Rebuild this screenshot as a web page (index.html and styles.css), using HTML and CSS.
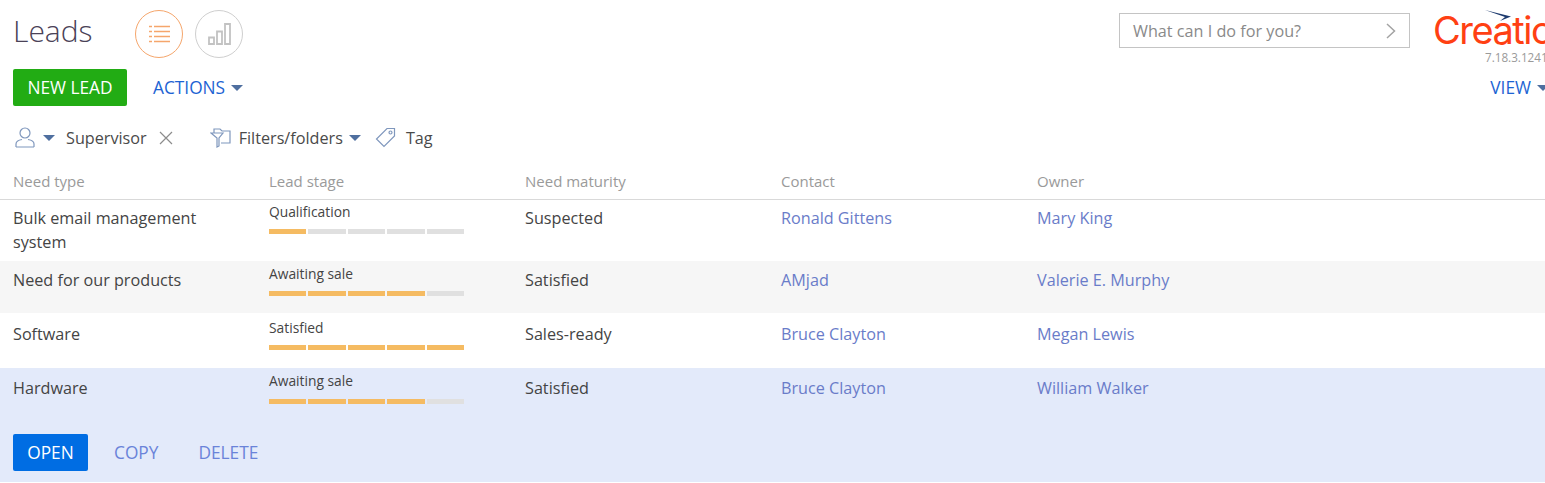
FILE: index.html
```html
<!DOCTYPE html>
<html lang="en">
<head>
  <meta charset="UTF-8" />
  <meta name="viewport" content="width=device-width, initial-scale=1.0" />
  <title>Leads</title>
  <link rel="stylesheet" href="styles.css">
</head>
<body>
  <div class="header">
    <h1 class="page-title">Leads</h1>
    <div class="view-switch">
      <div class="round-btn active">
        <svg width="21" height="18" viewBox="0 0 21 18" fill="none" stroke="#f5a66c" stroke-width="1.400">
          <path d="M0 1.500h3M5 1.500h16M0 6.500h3M5 6.500h16M0 11.500h3M5 11.500h16M0 16.500h3M5 16.500h16"/>
        </svg>
      </div>
      <div class="round-btn">
        <svg width="23" height="22" viewBox="0 0 23 22" fill="none" stroke="#c2c2c2" stroke-width="1.800">
          <path d="M1 14.500h5v6.500H1zM9 8.500h5v12.500H9zM17 1h5v20h-5z"/>
        </svg>
      </div>
    </div>
    <div class="header-right">
      <div class="search-box">
        <span>What can I do for you?</span>
        <svg width="10" height="16" viewBox="0 0 10 16" fill="none" stroke="#a3a3a3" stroke-width="1.500"><path d="M1 1l7.500 7L1 15"/></svg>
      </div>
      <div class="logo">
        <svg class="logo-wing" width="26" height="11" viewBox="0 0 26 11"><path d="M0 0l26 6.500-11 4.500 5-4z" fill="#1d3a6e"/></svg>
        <div class="logo-text">Creatio</div>
        <div class="version">7.18.3.1241</div>
      </div>
    </div>
  </div>

  <div class="toolbar">
    <div class="btn green">NEW LEAD</div>
    <div class="link-btn">ACTIONS<i class="caret"></i></div>
    <div class="link-btn view-btn">VIEW<i class="caret"></i></div>
  </div>

  <div class="filters">
    <svg class="user-icon" width="20" height="21" viewBox="0 0 20 21" fill="none" stroke="#7f97bd" stroke-width="1.200">
      <circle cx="10" cy="6" r="5"/>
      <path d="M1 20v-3c0-2.500 3-4 6-4.500M19 20v-3c0-2.500-3-4-6-4.500M1 20h18"/>
    </svg>
    <i class="caret user-caret"></i>
    <span class="filter-text">Supervisor</span>
    <svg class="close-icon" width="14" height="14" viewBox="0 0 14 14" stroke="#8c8c8c" stroke-width="1.200"><path d="M1 1l12 12M13 1L1 13"/></svg>
    <svg class="folder-icon" width="21" height="21" viewBox="0 0 21 21" fill="none" stroke="#7f97bd" stroke-width="1.200">
      <path d="M4 6V2h6l2 2h8v12h-9M1 6h12L9 11v8l-2 1v-9z"/>
    </svg>
    <span class="filter-text">Filters/folders</span>
    <i class="caret folder-caret"></i>
    <svg class="tag-icon" width="21" height="21" viewBox="0 0 21 21" fill="none" stroke="#7f97bd" stroke-width="1.200">
      <path d="M12 1.500h7.500V9L9 19.500 1.500 12z"/><circle cx="15.500" cy="5.500" r="1.500"/>
    </svg>
    <span class="filter-text">Tag</span>
  </div>

  <div class="grid-head">
    <div>Need type</div>
    <div>Lead stage</div>
    <div>Need maturity</div>
    <div>Contact</div>
    <div>Owner</div>
  </div>

  <div class="row row-first">
    <div>Bulk email management system</div>
    <div class="stage">
      <div class="stage-name">Qualification</div>
      <div class="bar"><i class="on"></i><i></i><i></i><i></i><i></i></div>
    </div>
    <div>Suspected</div>
    <div><a>Ronald Gittens</a></div>
    <div><a>Mary King</a></div>
  </div>

  <div class="row row-grey">
    <div>Need for our products</div>
    <div class="stage">
      <div class="stage-name">Awaiting sale</div>
      <div class="bar"><i class="on"></i><i class="on"></i><i class="on"></i><i class="on"></i><i></i></div>
    </div>
    <div>Satisfied</div>
    <div><a>AMjad</a></div>
    <div><a>Valerie E. Murphy</a></div>
  </div>

  <div class="row row-plain">
    <div>Software</div>
    <div class="stage">
      <div class="stage-name">Satisfied</div>
      <div class="bar"><i class="on"></i><i class="on"></i><i class="on"></i><i class="on"></i><i class="on"></i></div>
    </div>
    <div>Sales-ready</div>
    <div><a>Bruce Clayton</a></div>
    <div><a>Megan Lewis</a></div>
  </div>

  <div class="selected">
    <div class="row row-active">
      <div>Hardware</div>
      <div class="stage">
        <div class="stage-name">Awaiting sale</div>
        <div class="bar"><i class="on"></i><i class="on"></i><i class="on"></i><i class="on"></i><i></i></div>
      </div>
      <div>Satisfied</div>
      <div><a>Bruce Clayton</a></div>
      <div><a>William Walker</a></div>
    </div>
    <div class="row-actions">
      <div class="btn blue">OPEN</div>
      <div class="row-link">COPY</div>
      <div class="row-link">DELETE</div>
    </div>
  </div>
</body>
</html>
```

FILE: styles.css
```css
* {
  box-sizing: border-box;
}
html, body {
  overflow: hidden;
}
body {
  margin: 0;
  height: 483px;
  font-family: 'Open Sans', 'Liberation Sans', sans-serif;
  font-size: 16.200px;
  color: #444;
  background: #fff;
}
.header {
  display: flex;
  align-items: flex-start;
  height: 69px;
  padding-left: 13px;
}
.page-title {
  margin: 10px 0 0;
  width: 122px;
  font-size: 30px;
  line-height: 42px;
  font-weight: 300;
  color: #4a4257;
}
.view-switch {
  display: flex;
  gap: 12px;
  margin-top: 10px;
}
.round-btn {
  width: 48px;
  height: 48px;
  border: 1.500px solid #cfcfcf;
  border-radius: 50%;
  display: flex;
  align-items: center;
  justify-content: center;
}
.round-btn.active {
  border-color: #f5a66c;
}
.header-right {
  margin-left: auto;
  display: flex;
  align-items: flex-start;
}
.search-box {
  width: 291px;
  height: 35px;
  margin-top: 13px;
  border: 1px solid #c4c4c4;
  display: flex;
  align-items: center;
  justify-content: space-between;
  padding: 0 13px;
  color: #8a8a8a;
}
.logo {
  position: relative;
  width: 135px;
  padding-left: 23px;
  white-space: nowrap;
}
.logo-wing {
  position: absolute;
  top: 10px;
  left: 75px;
}
.logo-text {
  margin-top: 11px;
  font-family: 'Inter', 'Liberation Sans', sans-serif;
  font-size: 38px;
  line-height: 38px;
  font-weight: 400;
  letter-spacing: -1.500px;
  color: #ff4013;
}
.version {
  margin-top: 0;
  padding-left: 52px;
  font-size: 11.700px;
  line-height: 16px;
  color: #9a9a9a;
}
.toolbar {
  display: flex;
  align-items: center;
  height: 37px;
  padding-left: 13px;
}
.btn {
  display: flex;
  align-items: center;
  justify-content: center;
  height: 37px;
  border-radius: 2px;
  font-size: 17.300px;
  color: #fff;
}
.btn.green {
  width: 114px;
  background: #22ac14;
}
.btn.blue {
  width: 75px;
  background: #006de3;
}
.link-btn {
  display: flex;
  align-items: center;
  margin-left: 26px;
  font-size: 17.300px;
  color: #1c63d3;
}
.view-btn {
  margin-left: auto;
  margin-right: -4px;
}
.caret {
  display: inline-block;
  width: 0;
  height: 0;
  margin-left: 6px;
  border-left: 6px solid transparent;
  border-right: 6px solid transparent;
  border-top: 6px solid #4f6f9f;
}
.filters {
  display: flex;
  align-items: center;
  height: 47px;
  margin-top: 8px;
  padding-left: 15px;
  color: #4a4a4a;
}
.user-caret {
  margin-left: 8px;
}
.filter-text {
  white-space: nowrap;
}
.user-caret + .filter-text {
  margin-left: 11px;
}
.close-icon {
  margin-left: 12px;
}
.folder-icon {
  margin-left: 37px;
  margin-right: 8px;
}
.folder-caret {
  margin-left: 6px;
}
.tag-icon {
  margin-left: 14px;
  margin-right: 10px;
}
.grid-head,
.row {
  display: grid;
  grid-template-columns: repeat(4, 256px) 1fr;
  padding-left: 13px;
}
.grid-head {
  height: 34px;
  margin-top: 5px;
  padding-top: 5px;
  font-size: 15px;
  line-height: 20px;
  color: #9a9a9a;
  border-bottom: 1px solid #d9d9d9;
}
.row {
  line-height: 24px;
  padding-top: 6px;
}
.row a {
  color: #6a7cc9;
}
.row-first {
  height: 61px;
}
.row-first > div:first-child {
  width: 200px;
}
.row-grey {
  height: 52px;
  padding-top: 7px;
  background: #f6f6f6;
}
.row-plain {
  height: 55px;
  padding-top: 9px;
}
.row-active {
  height: 66px;
  padding-top: 8px;
}
.selected {
  height: 114px;
  background: #e3eafa;
}
.stage-name {
  margin-top: -4px;
  font-size: 13.800px;
  line-height: 20px;
}
.bar {
  display: flex;
  gap: 2px;
  width: 195px;
  margin-top: 7px;
}
.bar i {
  flex: 1;
  height: 5px;
  background: #e0e0e0;
}
.bar i.on {
  background: #f5bb62;
}
.row-active .stage-name {
  margin-top: -5px;
}
.row-active .bar {
  margin-top: 8px;
}
.row-actions {
  display: flex;
  align-items: center;
  padding-left: 13px;
}
.row-link {
  margin-left: 26px;
  margin-right: 14px;
  font-size: 17.300px;
  color: #6a83d9;
}
```
